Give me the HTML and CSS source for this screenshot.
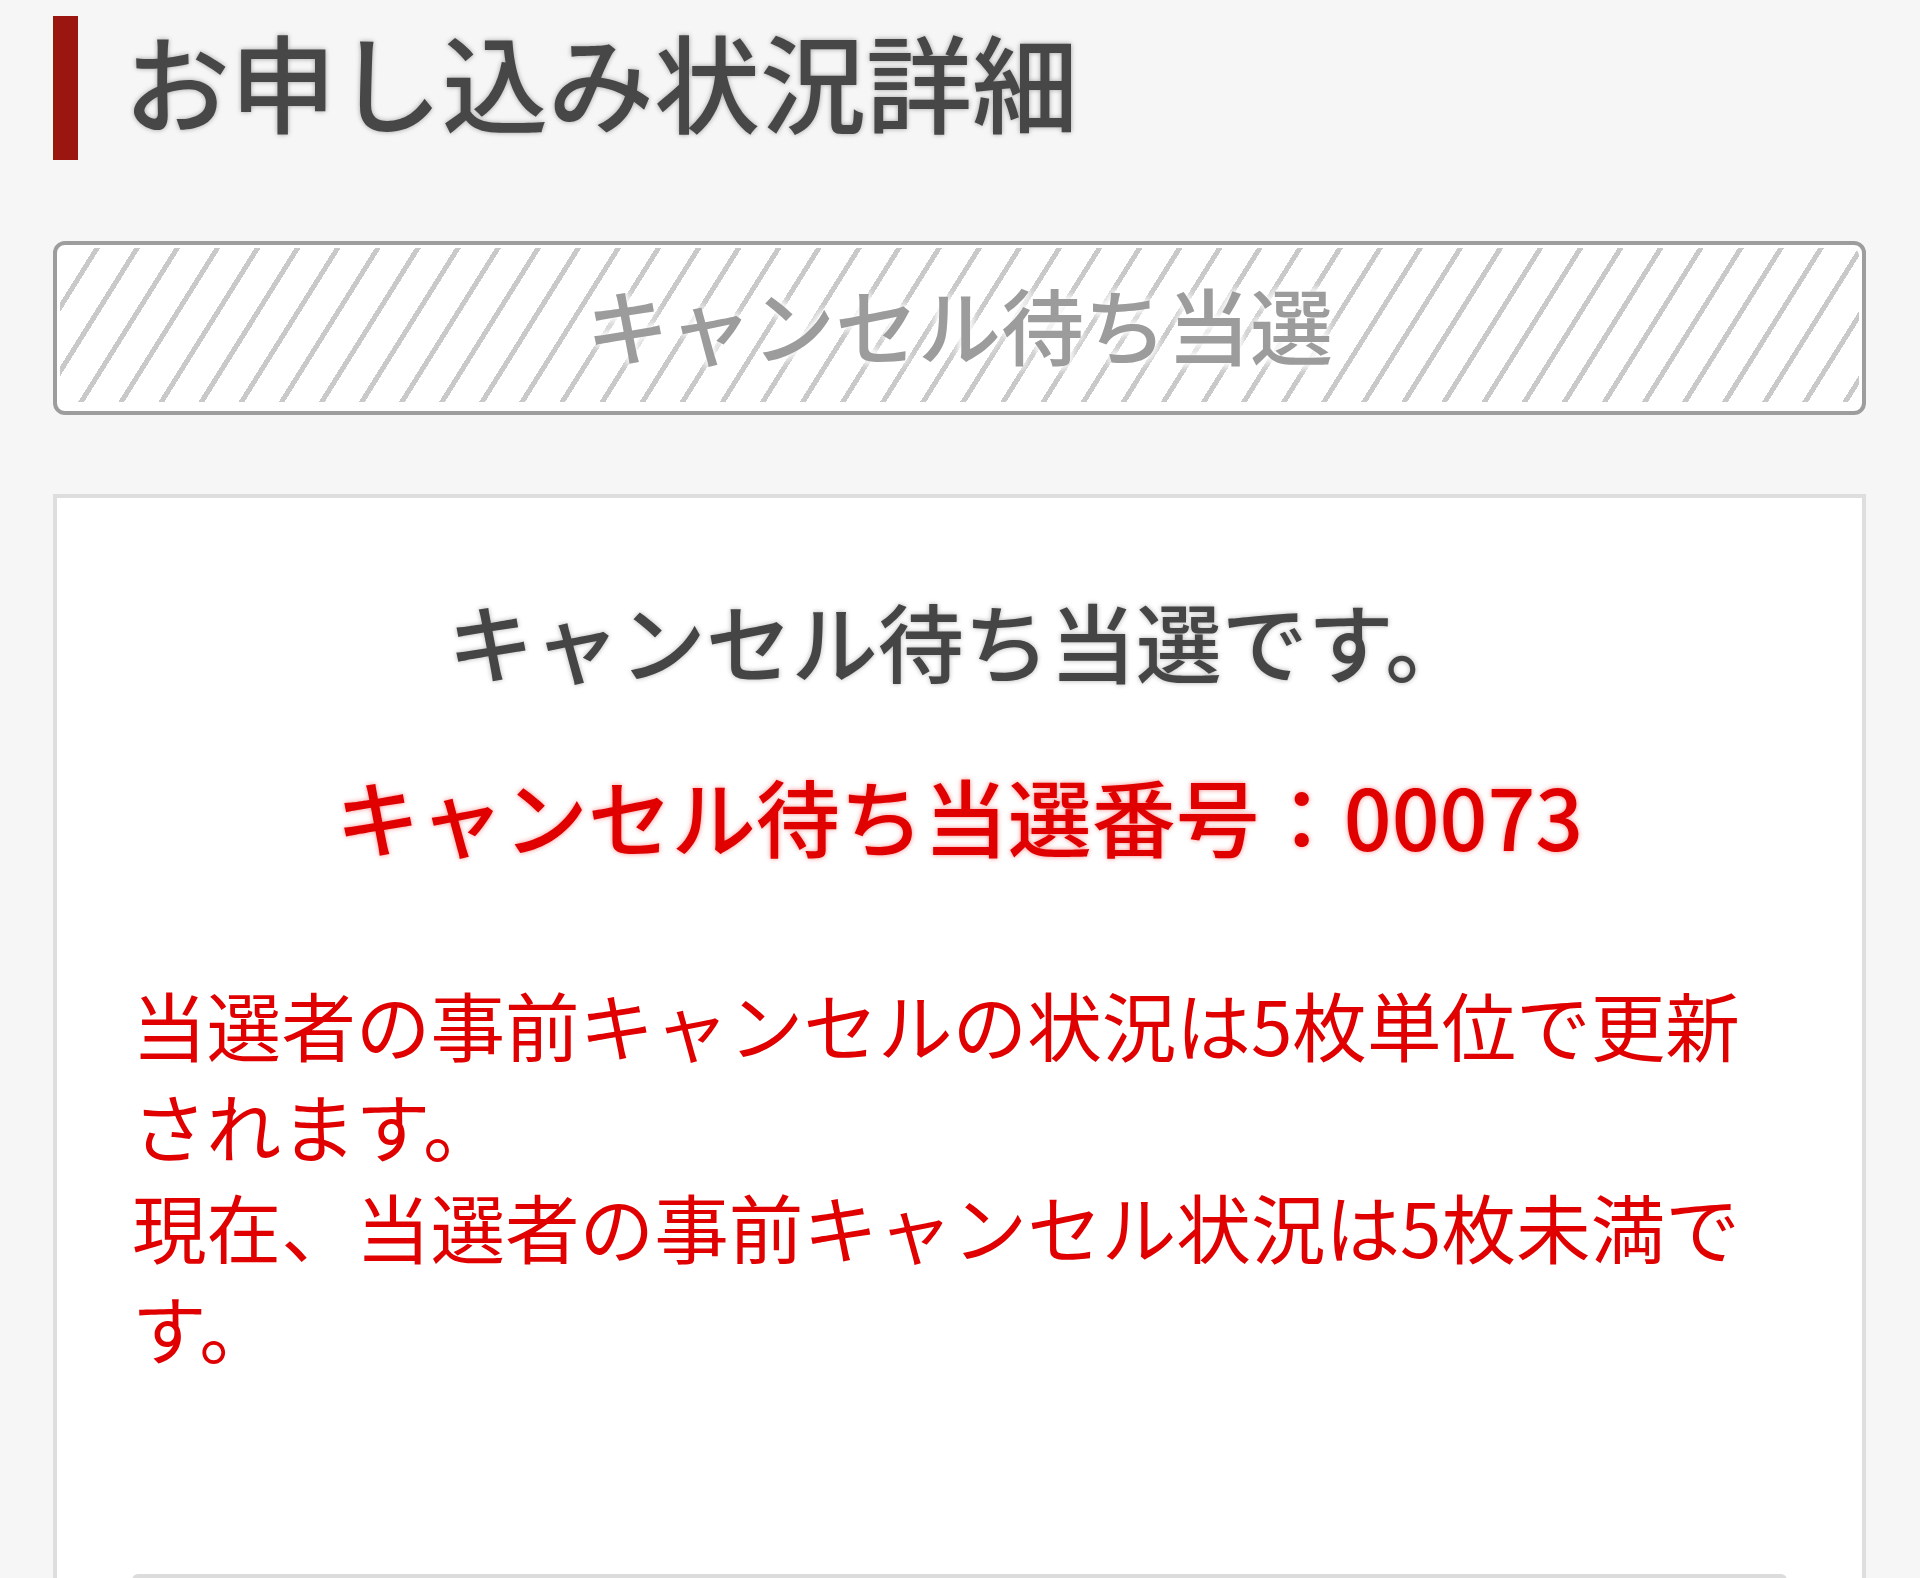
FILE: index.html
```html
<!DOCTYPE html>
<html lang="ja">
<head>
<meta charset="utf-8">
<title>お申し込み状況詳細</title>
<link rel="stylesheet" href="styles.css">
</head>
<body>
<div class="page">
  <h1 class="page-title">お申し込み状況詳細</h1>
  <div class="status-box">
    <div class="status-inner">
      <span class="status-label">キャンセル待ち当選</span>
    </div>
  </div>
  <div class="card">
    <p class="result">キャンセル待ち当選です。</p>
    <p class="number">キャンセル待ち当選番号：00073</p>
    <p class="note">当選者の事前キャンセルの状況は5枚単位で更新されます。<br>現在、当選者の事前キャンセル状況は5枚未満です。</p>
    <div class="card-button"></div>
  </div>
</div>
</body>
</html>
```

FILE: styles.css
```css
html, body {
  margin: 0;
  padding: 0;
  background: #f6f6f6;
}

body {
  font-family: "Noto Sans CJK JP", "Noto Sans", sans-serif;
  overflow: hidden;
}

.page {
  padding: 16px 54px 0 53px;
}

.page-title {
  margin: 0;
  height: 127px;
  padding: 0 0 17px 46px;
  border-left: 25px solid #9b1511;
  font-size: 106px;
  line-height: 127px;
  font-weight: 500;
  color: #474747;
  text-shadow: 0 0 5px rgba(0, 0, 0, 0.35);
  white-space: nowrap;
}

.status-box {
  margin-top: 81px;
  height: 160px;
  border: 4px solid #9d9d9d;
  border-radius: 12px;
  background: #ffffff;
  padding: 3px;
  box-sizing: content-box;
}

.status-inner {
  height: 154px;
  box-sizing: border-box;
  padding-bottom: 4px;
  border-radius: 8px;
  background: repeating-linear-gradient(122deg, #ffffff 0, #ffffff 29px, #c9c9c9 29px, #c9c9c9 34px);
  display: flex;
  align-items: center;
  justify-content: center;
}

.status-label {
  font-size: 83px;
  line-height: 120px;
  font-weight: 500;
  color: #9c9c9c;
  text-shadow: 0 0 6px #ffffff, 0 0 10px #ffffff, 0 0 14px #ffffff;
}

.card {
  margin-top: 79px;
  background: #ffffff;
  border: 4px solid #dedede;
  border-bottom: none;
  padding: 82px 75px 0 75px;
  min-height: 1200px;
}

.result {
  margin: 0;
  text-align: center;
  font-size: 86px;
  line-height: 120px;
  font-weight: 500;
  color: #454545;
  text-shadow: 0 0 5px rgba(0, 0, 0, 0.3);
}

.number {
  margin: 55px 0 0 0;
  text-align: center;
  font-size: 84px;
  line-height: 120px;
  color: #e00000;
  font-weight: 500;
  text-shadow: 0 0 5px rgba(230, 0, 0, 0.45);
}

.note {
  margin: 98px 0 0 0;
  font-size: 74.6px;
  line-height: 101px;
  color: #e00000;
}

.card-button {
  margin-top: 197px;
  height: 80px;
  background: #dcdcdc;
  border-radius: 6px 6px 0 0;
}
```
